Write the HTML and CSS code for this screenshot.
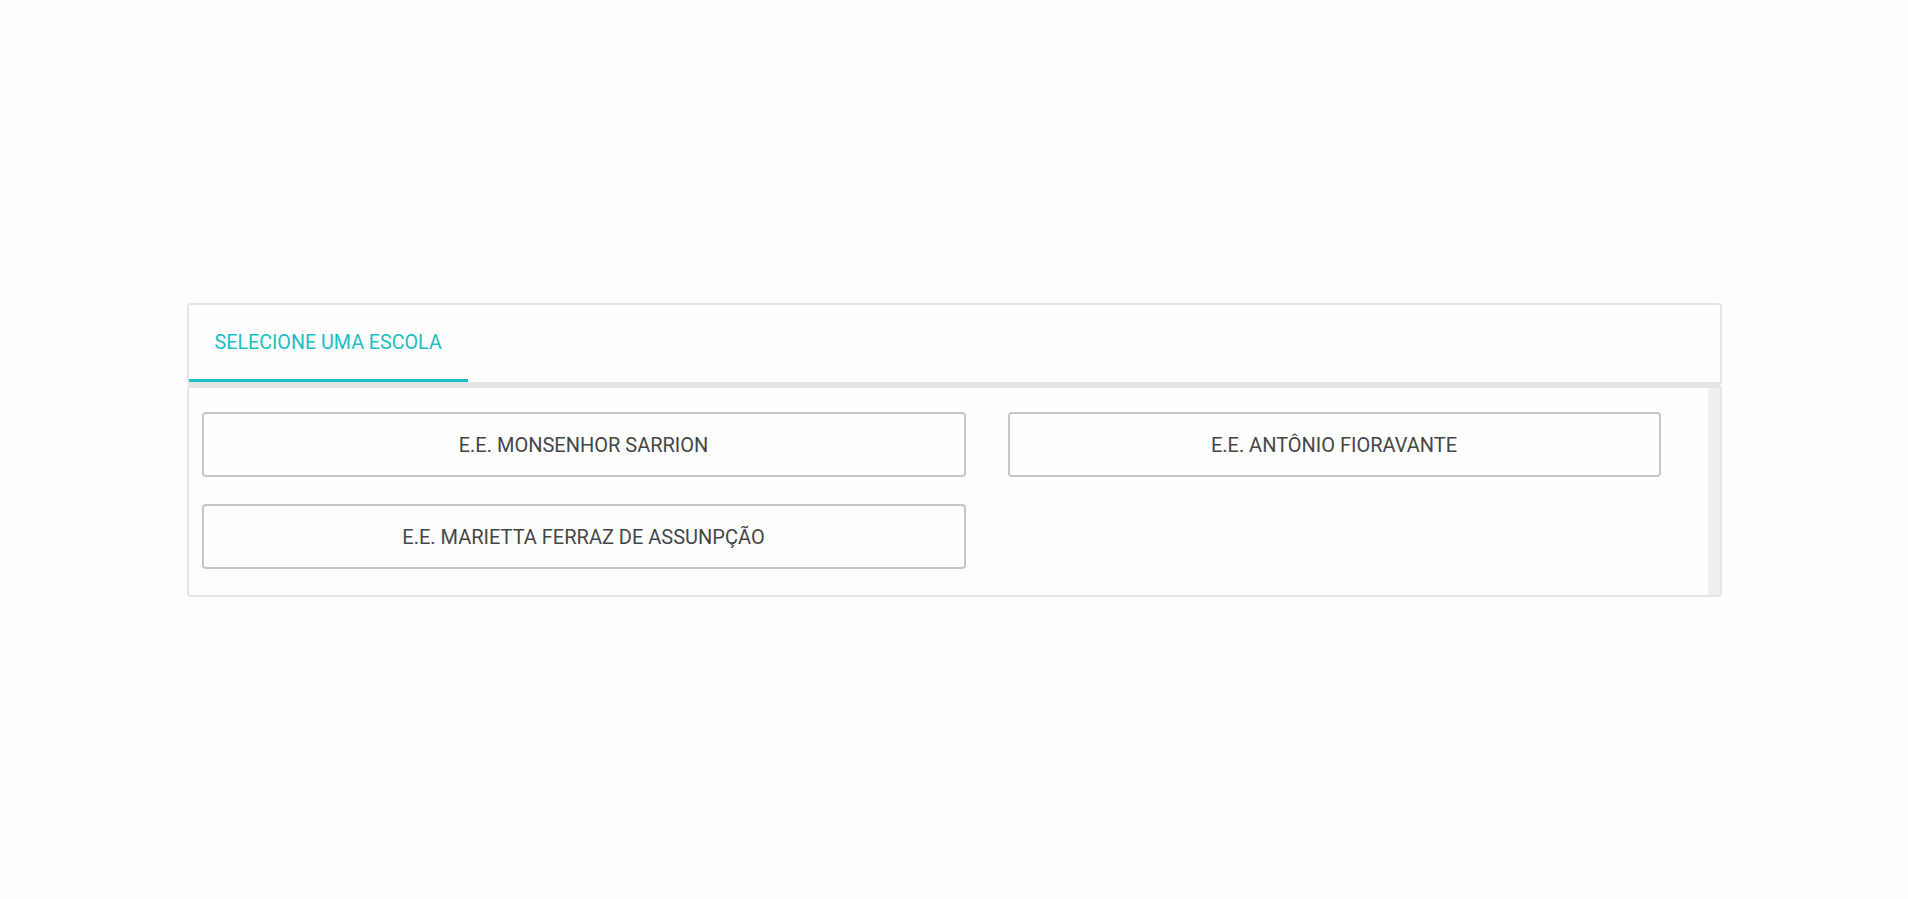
FILE: index.html
```html
<!DOCTYPE html>
<html lang="pt-BR">
<head>
<meta charset="utf-8">
<title>Selecione uma escola</title>
<link rel="stylesheet" href="styles.css">
</head>
<body>
<div class="page">
  <section class="panel">
    <header class="panel-head">
      <div class="tab tab-active">SELECIONE UMA ESCOLA</div>
    </header>
    <div class="panel-body">
      <div class="content">
        <div class="school-grid">
          <button class="school">E.E. MONSENHOR SARRION</button>
          <button class="school">E.E. ANTÔNIO FIORAVANTE</button>
          <button class="school">E.E. MARIETTA FERRAZ DE ASSUNPÇÃO</button>
        </div>
      </div>
      <div class="scrollbar"></div>
    </div>
  </section>
</div>
</body>
</html>
```

FILE: styles.css
```css
html, body {
  margin: 0;
  padding: 0;
  background: #fdfdfd;
  font-family: Roboto, "Liberation Sans", sans-serif;
}

.page {
  padding-top: 303px;
}

.panel {
  width: 1535px;
  margin: 0 auto;
}

.panel-head {
  box-sizing: border-box;
  height: 82px;
  border: 2px solid #e5e5e5;
  border-bottom-width: 3px;
  border-radius: 4px 4px 3px 3px;
  background: #fefefe;
  display: flex;
  align-items: flex-end;
}

.tab {
  box-sizing: border-box;
  height: 77px;
  padding: 0 26px;
  display: flex;
  align-items: center;
  font-size: 19.7px;
  white-space: nowrap;
}

.tab-active {
  color: #1bbfc2;
  border-bottom: 3px solid #17c0c2;
}

.panel-body {
  border: 2px solid #e5e5e5;
  border-top-width: 3px;
  border-radius: 3px 3px 4px 4px;
  background: #fefefe;
  display: flex;
}

.content {
  flex: 1;
  padding: 24px 0 26px 13px;
}

.scrollbar {
  width: 11px;
  background: #efefef;
  border-left: 1px solid #f3f3f3;
}

.school-grid {
  display: grid;
  grid-template-columns: 764px 653px;
  column-gap: 42px;
  row-gap: 27px;
}

.school {
  box-sizing: border-box;
  height: 65px;
  margin: 0;
  border: 2px solid #c6c6c6;
  border-radius: 4px;
  background: #fefefe;
  color: #464646;
  font-family: Roboto, "Liberation Sans", sans-serif;
  font-size: 20px;
  padding: 0 10px;
  text-align: center;
  cursor: pointer;
}
```
